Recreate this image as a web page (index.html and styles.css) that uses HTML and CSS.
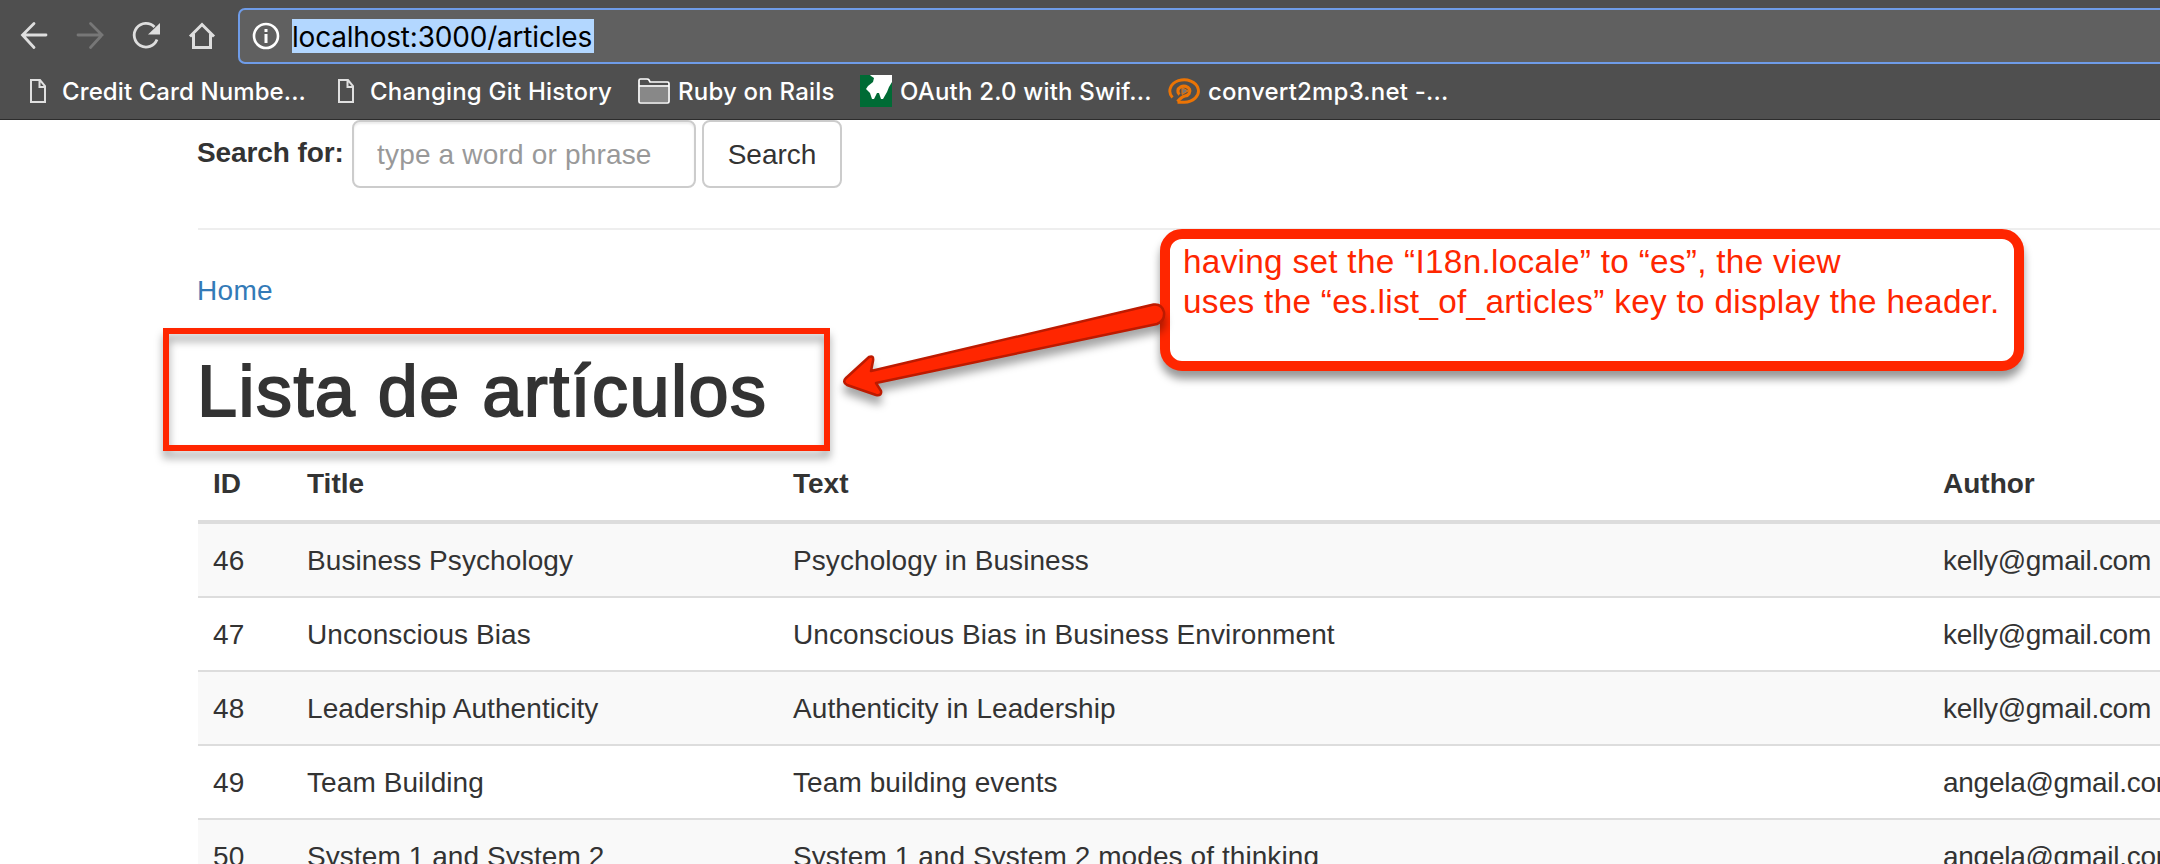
FILE: index.html
```html
<!DOCTYPE html>
<html lang="es">
<head>
<meta charset="utf-8">
<title>Articles</title>
<link rel="stylesheet" href="styles.css">
</head>
<body>
<header class="chrome">
  <div class="toolbar">
    <svg class="nav" viewBox="0 0 220 55" fill="none" stroke="#dedede" stroke-width="2.8">
      <path stroke-linecap="round" d="M46 27H23M34 15.500 22.500 27 34 39.500"/>
      <path stroke="#777" stroke-linecap="round" d="M78 27h24M90.500 15.500 102 27 90.500 39.500"/>
      <path d="M157 31.500a11.800 11.800 0 1 1-2.500-12.500"/>
      <path fill="#dedede" stroke="none" d="M160 15v11.500h-12z"/>
      <path d="M190 28.500 202 16.500l12 12M193.500 26v13.500h17V26" stroke-width="3"/>
    </svg>
    <div class="omnibox">
      <svg class="info" viewBox="0 0 28 28"><circle cx="14" cy="14" r="12" fill="none" stroke="#fff" stroke-width="2.600"/><path fill="#fff" d="M12.500 7h3v3h-3zM12.500 12h3v9h-3z"/></svg>
      <span class="url">localhost:3000/articles</span>
    </div>
  </div>
  <nav class="bookmarks">
    <a class="mark m1"><svg class="page-icon" viewBox="0 0 16 24"><path d="M1 1h9l5 6v16H1zM9.500 1v7H15" fill="none" stroke="#e0e0e0" stroke-width="2"/></svg><span>Credit Card Numbe...</span></a>
    <a class="mark m2"><svg class="page-icon" viewBox="0 0 16 24"><path d="M1 1h9l5 6v16H1zM9.500 1v7H15" fill="none" stroke="#e0e0e0" stroke-width="2"/></svg><span>Changing Git History</span></a>
    <a class="mark m3"><svg class="folder" viewBox="0 0 32 26"><path d="M1 23.500V2.500q0-1.500 1.500-1.500H9q1.500 0 2 1l1 2H29.500Q31 4 31 5.500v18q0 1.500-1.500 1.500h-27Q1 25 1 23.500z" fill="#4f4f4f" stroke="#fff" stroke-width="1.700"/><path d="M2 9h28v15H2z" fill="#888"/><path d="M1 8h30" stroke="#fff" stroke-width="1.700"/></svg><span>Ruby on Rails</span></a>
    <a class="mark m4"><svg class="wicon" viewBox="0 0 32 32"><path fill="#006b35" d="M0 0h32v32H0z"/><path fill="#fff" d="M10 0h22v7l-3 5-2 5-4 7h-2l-2-6h-2l-3 6h-2l-2-6-4-4 2-3 5-4 1-4-3-2z"/></svg><span>OAuth 2.0 with Swif...</span></a>
    <a class="mark m5"><svg class="cicon" viewBox="0 0 32 26" fill="none" stroke="#ec7404"><path d="M4.500 19.500A14.300 11.200 0 1 1 16 24.200H9.500" stroke-width="2.900"/><path d="M11.500 16.500A6 5 0 1 1 17 18Q14 18.500 9.500 23.500" stroke-width="3.200"/><path fill="#777" stroke-width="1" d="m14 9.500 6 3.500-6 3.500z"/></svg><span>convert2mp3.net -...</span></a>
  </nav>
</header>
<main class="page">
  <form class="search">
    <label for="q">Search for:</label>
    <input id="q" type="text" placeholder="type a word or phrase">
    <button type="button">Search</button>
  </form>
  <hr>
  <a class="home">Home</a>
  <h1>Lista de artículos</h1>
  <table>
    <colgroup><col class="c1"><col class="c2"><col class="c3"><col class="c4"></colgroup>
    <thead><tr><th>ID</th><th>Title</th><th>Text</th><th>Author</th></tr></thead>
    <tbody>
      <tr><td>46</td><td>Business Psychology</td><td>Psychology in Business</td><td class="email">kelly@gmail.com</td></tr>
      <tr><td>47</td><td>Unconscious Bias</td><td>Unconscious Bias in Business Environment</td><td class="email">kelly@gmail.com</td></tr>
      <tr><td>48</td><td>Leadership Authenticity</td><td>Authenticity in Leadership</td><td class="email">kelly@gmail.com</td></tr>
      <tr><td>49</td><td>Team Building</td><td>Team building events</td><td class="email">angela@gmail.com</td></tr>
      <tr><td>50</td><td>System 1 and System 2</td><td>System 1 and System 2 modes of thinking</td><td class="email">angela@gmail.com</td></tr>
    </tbody>
  </table>
</main>
<div class="frame"></div>
<div class="callout">having set the “I18n.locale” to “es”, the view<br>uses the “es.list_of_articles” key to display the header.</div>
<svg class="arrow" viewBox="820 280 360 140">
  <path d="M1153.500 304.500Q1162 303.500 1164 312Q1165 321 1157 324L876 383L881 391Q882 396 876 395L847 385Q842 382 846 378L869 357Q874 355 873 361L871 371Z" fill="#ff2600" stroke="#bd1a00" stroke-width="2.500" stroke-linejoin="round"/>
</svg>
</body>
</html>
```
FILE: styles.css
```css
* { box-sizing: border-box; }
html { overflow: hidden; }
body {
  margin: 0;
  width: 2160px;
  height: 864px;
  overflow: hidden;
  position: relative;
  background: #fff;
  color: #333;
  font: 28px/40px "Liberation Sans", Arial, sans-serif;
}
.chrome {
  height: 120px;
  background: #4f4f4f;
  border-bottom: 1px solid #2c2c2c;
  overflow: hidden;
  font-family: Inter, Roboto, sans-serif;
}
.toolbar { display: flex; height: 64px; padding-top: 8px; }
.nav { width: 220px; height: 55px; margin: 0 18px 0 0; flex: none; }
.omnibox {
  display: flex;
  align-items: center;
  flex: 1;
  height: 56px;
  margin-right: -10px;
  padding-left: 12px;
  background: #606060;
  border: 2px solid #6f9ce8;
  border-radius: 7px;
}
.info { width: 28px; height: 28px; margin-right: 12px; }
.url {
  height: 34px;
  line-height: 37px;
  width: 302px;
  white-space: nowrap;
  background: #b3d7ff;
  color: #000;
  font-size: 28px;
  letter-spacing: -.2px;
}
.bookmarks { display: flex; height: 54px; align-items: center; color: #fff; font-size: 24px; font-weight: 500; padding-left: 30px; letter-spacing: .2px; }
.bookmarks span { padding-top: 2px; }
.mark { display: flex; align-items: center; white-space: nowrap; flex: none; }
.m1 { width: 308px; letter-spacing: .1px; }
.m2 { width: 300px; }
.m3 { width: 222px; }
.m4 { width: 308px; }
.page-icon { width: 16px; height: 24px; margin-right: 16px; }
.folder { width: 32px; height: 26px; margin-right: 8px; }
.wicon { width: 32px; height: 32px; margin-right: 8px; }
.cicon { width: 32px; height: 26px; margin-right: 8px; }
.page { height: 744px; padding-left: 197px; overflow: hidden; }
.search { display: flex; align-items: flex-start; height: 108px; }
label { font-weight: 700; line-height: 66px; width: 155px; white-space: nowrap; letter-spacing: -.1px; }
input {
  width: 344px;
  height: 68px;
  margin: 0 6px 0 0;
  padding: 1px 23px 0;
  font: inherit;
  letter-spacing: .18px;
  border: 2px solid #ccc;
  border-radius: 8px;
  box-shadow: inset 0 2px 2px rgba(0,0,0,.075);
}
input::placeholder { color: #999; opacity: 1; }
button {
  width: 140px;
  height: 68px;
  padding: 1px 0 0;
  font: inherit;
  color: #333;
  background: #fff;
  border: 2px solid #ccc;
  border-radius: 8px;
}
hr { margin: 0 0 0 1px; border: 0; height: 2px; background: #eee; }
.home { display: block; padding-top: 41px; color: #337ab7; letter-spacing: .3px; }
h1 { margin: 40px 0 0; font-size: 72px; line-height: 80px; font-weight: 500; letter-spacing: 1.45px; -webkit-text-stroke: 1.9px #333; }
table { margin: 16px 0 0 1px; width: 2239px; table-layout: fixed; border-collapse: separate; border-spacing: 0; }
.c1 { width: 93px; }
.c2 { width: 486px; }
.c3 { width: 1150px; }
.c4 { width: 510px; }
th, td { text-align: left; padding: 2px 16px 0; white-space: nowrap; }
th:first-child, td:first-child { padding-left: 15px; }
th { height: 77px; padding-top: 1px; font-weight: 700; border-bottom: 4px solid #ddd; }
td { height: 74px; border-bottom: 2px solid #ddd; letter-spacing: .08px; }
.email { letter-spacing: -.27px; }
tbody tr:nth-child(odd) { background: #f9f9f9; }
.frame {
  position: absolute;
  left: 163px;
  top: 328px;
  width: 667px;
  height: 123px;
  border: 6px solid #ff2600;
  filter: drop-shadow(0 7px 4px rgba(0,0,0,.35));
}
.callout {
  position: absolute;
  left: 1160px;
  top: 229px;
  width: 864px;
  height: 142px;
  padding: 3px 13px;
  color: #ff2600;
  background: #fff;
  border: 10px solid #ff2600;
  border-radius: 22px;
  box-shadow: 0 8px 9px rgba(0,0,0,.4);
  font-size: 33.3px;
  line-height: 40px;
  letter-spacing: .3px;
  white-space: nowrap;
}
.arrow { position: absolute; left: 820px; top: 280px; width: 360px; height: 140px; filter: drop-shadow(0 8px 4px rgba(0,0,0,.35)); }
```
